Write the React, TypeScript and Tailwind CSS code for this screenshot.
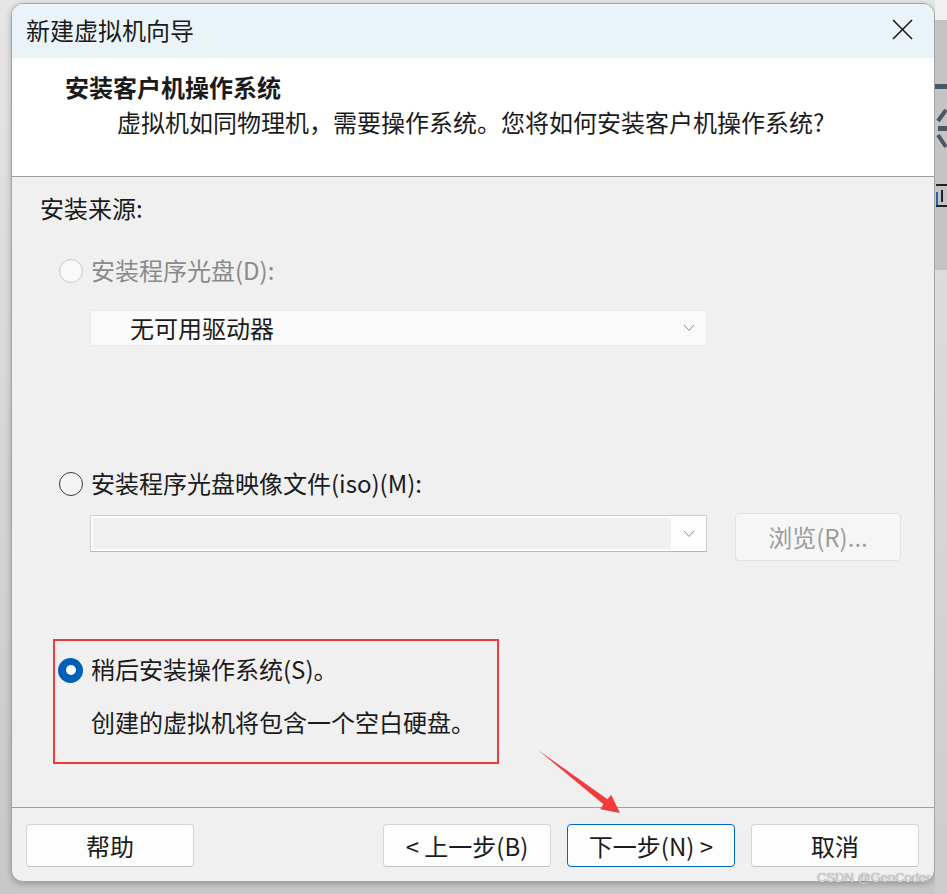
import React from "react";

function Radio({ kind }: { kind: "disabled" | "off" | "on" }) {
  if (kind === "on")
    return (
      <div className="w-[25px] h-[25px] rounded-full bg-[#005fb8] flex items-center justify-center shrink-0">
        <div className="w-[10px] h-[10px] rounded-full bg-white" />
      </div>
    );
  if (kind === "disabled")
    return <div className="w-[24px] h-[24px] rounded-full border border-[#c8c8c8] bg-[#f8f8f8] shrink-0" />;
  return <div className="w-[24px] h-[24px] rounded-full border-[1.5px] border-[#3a3a3a] bg-[#f3f3f3] shrink-0" />;
}

function Chevron() {
  return (
    <svg width="12" height="8" viewBox="0 0 12 8" className="shrink-0">
      <polyline points="1,1 6,6.5 11,1" fill="none" stroke="#8c8c8c" strokeWidth="1" />
    </svg>
  );
}

function Button({ children, primary }: { children: React.ReactNode; primary?: boolean }) {
  return (
    <div
      className={
        "w-[168px] h-[43px] rounded-[4px] bg-[#fdfdfd] flex items-center justify-center text-[24px] text-[#1b1b1b] leading-none " +
        (primary ? "border-[1.5px] border-[#0067c0]" : "border border-[#d4d4d4] border-b-[#c2c2c2]")
      }
    >
      {children}
    </div>
  );
}

export default function App() {
  return (
    <div className="relative w-[947px] h-[894px] overflow-hidden bg-gradient-to-b from-[#e6e6e6] via-[#d6d6d6] to-[#c8c8c8] font-['Noto_Sans_CJK_SC','Microsoft_YaHei',sans-serif] text-[#1b1b1b]">
      <div className="flex h-full">
        <div className="pl-[11px] pt-[3px]">
          <div className="w-[924px] h-[879px] rounded-[12px] border border-[#a4a4a4] bg-[#f0f0f0] overflow-hidden flex flex-col shadow-[0_2px_6px_rgba(0,0,0,0.25)]">
            {/* title bar */}
            <div className="h-[54px] bg-[#eaf3f7] flex items-center justify-between pl-[14px] pr-[21px] pb-[3px] shrink-0">
              <span className="text-[24px] leading-none">新建虚拟机向导</span>
              <svg width="21" height="21" viewBox="0 0 21 21">
                <line x1="1" y1="1" x2="20" y2="20" stroke="#1b1b1b" strokeWidth="1.6" />
                <line x1="20" y1="1" x2="1" y2="20" stroke="#1b1b1b" strokeWidth="1.6" />
              </svg>
            </div>
            {/* header */}
            <div className="h-[119px] bg-white border-b border-[#a0a0a0] pt-[13px] shrink-0">
              <div className="pl-[53px] h-[32px] flex items-center text-[24px] font-bold leading-none">安装客户机操作系统</div>
              <div className="pl-[105px] mt-[3px] h-[32px] flex items-center text-[24px] leading-none">
                虚拟机如同物理机，需要操作系统。您将如何安装客户机操作系统?
              </div>
            </div>
            {/* body */}
            <div className="h-[631px] border-b border-[#a0a0a0] flex flex-col shrink-0">
              <div className="h-[62px] flex items-center pl-[28px] text-[24px] leading-none">安装来源:</div>
              <div className="h-[62px] mt-[1px] flex items-center pl-[47px] gap-[8px]">
                <Radio kind="disabled" />
                <span className="text-[24px] leading-none text-[#8a8a8a] -translate-y-[1px]">安装程序光盘(D):</span>
              </div>
              <div className="mt-[8px] ml-[78px] w-[617px] h-[36px] bg-[#fafafa] border border-[#ebebeb] flex items-center justify-between pl-[39px] pr-[11px]">
                <span className="text-[24px] leading-none">无可用驱动器</span>
                <Chevron />
              </div>
              <div className="mt-[118px] h-[40px] flex items-center pl-[47px] gap-[8px]">
                <Radio kind="off" />
                <span className="text-[24px] leading-none -translate-y-[1px]">安装程序光盘映像文件(iso)(M):</span>
              </div>
              <div className="mt-[9px] ml-[78px] flex items-start gap-[28px]">
                <div className="mt-[2px] w-[617px] h-[37px] bg-[#fdfdfd] border border-[#cfcfcf] border-b-[#b8b8b8] flex items-center p-[2px] pr-[11px]">
                  <div className="h-full w-[578px] bg-[#f0f0f0]" />
                  <div className="flex-1" />
                  <Chevron />
                </div>
                <div className="w-[166px] h-[48px] rounded-[4px] bg-[#f6f6f6] border border-[#e2e2e2] flex items-center justify-center text-[24px] leading-none text-[#9c9c9c]">
                  浏览(R)...
                </div>
              </div>
              <div className="mt-[78px] ml-[41px] w-[446px] h-[125px] border-2 border-[#f03a3a] flex flex-col">
                <div className="h-[58px] flex items-center pl-[3px] gap-[8px]">
                  <Radio kind="on" />
                  <span className="text-[24px] leading-none -translate-y-[1px]">稍后安装操作系统(S)。</span>
                </div>
                <div className="h-[46px] flex items-center pl-[36px] text-[24px] leading-none">创建的虚拟机将包含一个空白硬盘。</div>
              </div>
            </div>
            {/* footer */}
            <div className="flex-1 flex items-start pt-[16px] pl-[14px] pr-[15px]">
              <Button>帮助</Button>
              <div className="ml-auto flex gap-[16px]">
                <Button>&lt; 上一步(B)</Button>
                <Button primary>下一步(N) &gt;</Button>
                <Button>取消</Button>
              </div>
            </div>
          </div>
        </div>
        {/* background strip at right */}
        <div className="flex-1 flex flex-col">
          <div className="h-[20px] bg-[#efefef]" />
          <div className="h-[250px] bg-[#c4c4c4] relative">
            <svg width="12" height="250" viewBox="0 0 12 250" className="absolute left-0 top-0">
              <rect x="0" y="64" width="12" height="5" fill="#4a5866" />
              <line x1="11" y1="90" x2="3" y2="101" stroke="#4a5866" strokeWidth="4" />
              <line x1="3" y1="115" x2="11" y2="127" stroke="#4a5866" strokeWidth="4" />
              <rect x="3" y="106" width="9" height="5" fill="#4a5866" />
              <rect x="1" y="164" width="11" height="2" fill="#222" />
              <rect x="1" y="172" width="2" height="14" fill="#2b5fa8" />
              <rect x="1" y="185" width="11" height="2" fill="#222" />
              <rect x="6" y="170" width="2" height="12" fill="#222" />
            </svg>
          </div>
          <div className="flex-1 bg-gradient-to-b from-[#dcdcdc] to-[#cccccc]" />
        </div>
      </div>
      {/* red arrow annotation */}
      <svg className="absolute left-0 top-0 pointer-events-none" width="947" height="894">
        <polygon
          points="538,750 603.4,804.3 600.2,809.2 620,813 611.2,794.8 607.5,799.3"
          fill="#f23c3c"
        />
      </svg>
      <div className="absolute left-[817px] top-[871px] text-[13px] leading-none whitespace-nowrap font-['Liberation_Sans',Arial,sans-serif] text-[#dadada] [text-shadow:0_0_1px_#6a6a6a]">
        CSDN @GenCoder
      </div>
    </div>
  );
}
